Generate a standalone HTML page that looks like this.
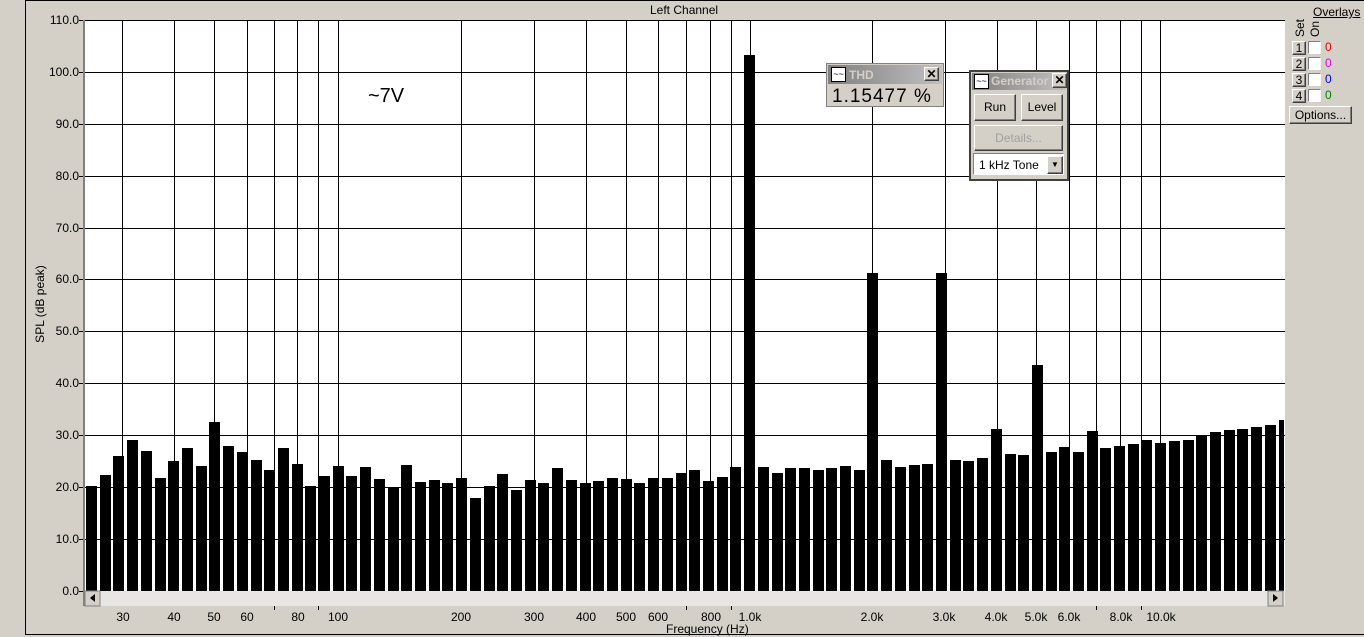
<!DOCTYPE html>
<html><head><style>
body{margin:0;width:1364px;height:637px;overflow:hidden;background:#d4d0c8;font-family:"Liberation Sans",Arial,sans-serif;position:relative}
.a{position:absolute}
.yl{position:absolute;right:1285px;font-size:12px;width:60px;text-align:right}
.fl{position:absolute;top:610px;font-size:12px;transform:translateX(-50%)}
.btn{position:absolute;background:#d4d0c8;border:1px solid;border-color:#fff #404040 #404040 #fff;box-shadow:inset -1px -1px #808080;font-size:12px;text-align:center}
.cb{position:absolute;width:11px;height:11px;background:#fff;border:1px solid;border-color:#808080 #fff #fff #808080}
</style></head><body>
<div class="a" style="left:25px;top:0;width:1339px;height:635px;border-left:1px solid #000;border-bottom:1px solid #000;border-top:1px solid #000;box-sizing:border-box"></div>
<div class="a" style="left:0;top:3px;width:1364px;text-align:center;font-size:12px;padding-left:4px;box-sizing:border-box;width:1364px"><span style="position:absolute;left:650px">Left Channel</span></div>
<svg class="a" style="left:0;top:0" width="1364" height="637">
<rect x="85" y="20" width="1200" height="571" fill="#fff"/>
<g stroke="#000" stroke-width="1">
<path d="M85 20.5H1285M85 72.5H1285M85 124.5H1285M85 176.5H1285M85 228.5H1285M85 279.5H1285M85 331.5H1285M85 383.5H1285M85 435.5H1285M85 487.5H1285M85 539.5H1285M85 591.5H1285"/>
<path d="M122.5 20V591M174.5 20V591M214.5 20V591M247.5 20V591M274.5 20V591M297.5 20V591M318.5 20V591M338.5 20V591M461.5 20V591M534.5 20V591M586.5 20V591M626.5 20V591M658.5 20V591M686.5 20V591M710.5 20V591M731.5 20V591M750.5 20V591M872.5 20V591M945.5 20V591M997.5 20V591M1036.5 20V591M1069.5 20V591M1096.5 20V591M1120.5 20V591M1141.5 20V591M1160.5 20V591"/>
<path d="M79 20.5H85M79 72.5H85M79 124.5H85M79 176.5H85M79 228.5H85M79 279.5H85M79 331.5H85M79 383.5H85M79 435.5H85M79 487.5H85M79 539.5H85M79 591.5H85"/>
</g>
<g transform="translate(0,591) scale(1,-1)" fill="#000">
<rect x="86" width="11" height="105"/><rect x="100" width="11" height="116"/><rect x="113" width="11" height="135"/><rect x="127" width="11" height="151"/><rect x="141" width="11" height="140"/><rect x="155" width="11" height="113"/><rect x="168" width="11" height="130"/><rect x="182" width="11" height="143"/><rect x="196" width="11" height="125"/><rect x="209" width="11" height="169"/><rect x="223" width="11" height="145"/><rect x="237" width="11" height="139"/><rect x="251" width="11" height="131"/><rect x="264" width="11" height="121"/><rect x="278" width="11" height="143"/><rect x="292" width="11" height="127"/><rect x="305" width="11" height="105"/><rect x="319" width="11" height="115"/><rect x="333" width="11" height="125"/><rect x="346" width="11" height="115"/><rect x="360" width="11" height="124"/><rect x="374" width="11" height="112"/><rect x="388" width="11" height="104"/><rect x="401" width="11" height="126"/><rect x="415" width="11" height="109"/><rect x="429" width="11" height="111"/><rect x="442" width="11" height="108"/><rect x="456" width="11" height="113"/><rect x="470" width="11" height="93"/><rect x="484" width="11" height="105"/><rect x="497" width="11" height="117"/><rect x="511" width="11" height="101"/><rect x="525" width="11" height="111"/><rect x="538" width="11" height="108"/><rect x="552" width="11" height="123"/><rect x="566" width="11" height="111"/><rect x="580" width="11" height="108"/><rect x="593" width="11" height="110"/><rect x="607" width="11" height="113"/><rect x="621" width="11" height="112"/><rect x="634" width="11" height="108"/><rect x="648" width="11" height="113"/><rect x="662" width="11" height="113"/><rect x="676" width="11" height="118"/><rect x="689" width="11" height="121"/><rect x="703" width="11" height="110"/><rect x="717" width="11" height="114"/><rect x="730" width="11" height="124"/><rect x="744" width="11" height="536"/><rect x="758" width="11" height="124"/><rect x="772" width="11" height="118"/><rect x="785" width="11" height="123"/><rect x="799" width="11" height="123"/><rect x="813" width="11" height="121"/><rect x="826" width="11" height="123"/><rect x="840" width="11" height="125"/><rect x="854" width="11" height="121"/><rect x="867" width="11" height="318"/><rect x="881" width="11" height="131"/><rect x="895" width="11" height="124"/><rect x="909" width="11" height="126"/><rect x="922" width="11" height="127"/><rect x="936" width="11" height="318"/><rect x="950" width="11" height="131"/><rect x="963" width="11" height="130"/><rect x="977" width="11" height="133"/><rect x="991" width="11" height="162"/><rect x="1005" width="11" height="137"/><rect x="1018" width="11" height="136"/><rect x="1032" width="11" height="226"/><rect x="1046" width="11" height="139"/><rect x="1059" width="11" height="144"/><rect x="1073" width="11" height="139"/><rect x="1087" width="11" height="160"/><rect x="1100" width="11" height="143"/><rect x="1114" width="11" height="145"/><rect x="1128" width="11" height="147"/><rect x="1141" width="11" height="151"/><rect x="1155" width="11" height="148"/><rect x="1169" width="11" height="150"/><rect x="1183" width="11" height="151"/><rect x="1196" width="11" height="155"/><rect x="1210" width="11" height="159"/><rect x="1224" width="11" height="161"/><rect x="1237" width="11" height="162"/><rect x="1251" width="11" height="164"/><rect x="1265" width="11" height="166"/><rect x="1279" width="5" height="171"/>
</g>
<rect x="83" y="20" width="2" height="586" fill="#808080"/>
<rect x="85" y="591" width="1200" height="15" fill="#e8e6e2"/>
<rect x="85" y="591" width="15" height="15" fill="#d4d0c8" stroke="#808080"/>
<path d="M95 594v8l-5-4z" fill="#000"/>
<rect x="1268" y="591" width="15" height="15" fill="#d4d0c8" stroke="#808080"/>
<path d="M1273 594v8l5-4z" fill="#000"/>
<g stroke="#000"><path d="M274.5 606v4M318.5 606v4M686.5 606v4M731.5 606v4M1096.5 606v4M1141.5 606v4"/></g>
</svg>
<div class="yl" style="top:13px">110.0</div><div class="yl" style="top:65px">100.0</div><div class="yl" style="top:117px">90.0</div><div class="yl" style="top:169px">80.0</div><div class="yl" style="top:221px">70.0</div><div class="yl" style="top:272px">60.0</div><div class="yl" style="top:324px">50.0</div><div class="yl" style="top:376px">40.0</div><div class="yl" style="top:428px">30.0</div><div class="yl" style="top:480px">20.0</div><div class="yl" style="top:532px">10.0</div><div class="yl" style="top:584px">0.0</div>
<div class="a" style="left:-10px;top:297px;width:100px;text-align:center;font-size:12px;transform:rotate(-90deg)">SPL (dB peak)</div>
<div class="a" style="left:368px;top:85px;font-size:20px">~7V</div>
<div class="fl" style="left:123px">30</div><div class="fl" style="left:174px">40</div><div class="fl" style="left:214px">50</div><div class="fl" style="left:247px">60</div><div class="fl" style="left:298px">80</div><div class="fl" style="left:338px">100</div><div class="fl" style="left:461px">200</div><div class="fl" style="left:534px">300</div><div class="fl" style="left:586px">400</div><div class="fl" style="left:626px">500</div><div class="fl" style="left:658px">600</div><div class="fl" style="left:711px">800</div><div class="fl" style="left:750px">1.0k</div><div class="fl" style="left:872px">2.0k</div><div class="fl" style="left:944px">3.0k</div><div class="fl" style="left:996px">4.0k</div><div class="fl" style="left:1036px">5.0k</div><div class="fl" style="left:1069px">6.0k</div><div class="fl" style="left:1121px">8.0k</div><div class="fl" style="left:1161px">10.0k</div>
<div class="a" style="left:666px;top:622px;font-size:12px">Frequency (Hz)</div>
<!-- right panel -->
<div class="a" style="left:1313px;top:5px;font-size:12px;text-decoration:underline">Overlays</div>
<div class="a" style="left:1293px;top:20px;font-size:12px;transform:rotate(-90deg);transform-origin:left top;top:37px">Set</div>
<div class="a" style="left:1308px;top:37px;font-size:12px;transform:rotate(-90deg);transform-origin:left top">On</div>
<div class="btn" style="left:1292px;top:41px;width:12px;height:12px;line-height:12px">1</div><div class="cb" style="left:1308px;top:41px"></div><div class="a" style="left:1325px;top:40px;font-size:12px;color:#e00000">0</div>
<div class="btn" style="left:1292px;top:57px;width:12px;height:12px;line-height:12px">2</div><div class="cb" style="left:1308px;top:57px"></div><div class="a" style="left:1325px;top:56px;font-size:12px;color:#e000e0">0</div>
<div class="btn" style="left:1292px;top:73px;width:12px;height:12px;line-height:12px">3</div><div class="cb" style="left:1308px;top:73px"></div><div class="a" style="left:1325px;top:72px;font-size:12px;color:#0000e0">0</div>
<div class="btn" style="left:1292px;top:89px;width:12px;height:12px;line-height:12px">4</div><div class="cb" style="left:1308px;top:89px"></div><div class="a" style="left:1325px;top:88px;font-size:12px;color:#008000">0</div>
<div class="btn" style="left:1289px;top:106px;width:61px;height:16px;line-height:16px">Options...</div>
<!-- THD -->
<div class="a" style="left:826px;top:63px;width:118px;height:44px;background:#d4d0c8;border:1px solid #808080;box-sizing:border-box">
<div class="a" style="left:1px;top:1px;width:114px;height:19px;background:linear-gradient(90deg,#808080,#c0c0c0)"></div>
<div class="a" style="left:4px;top:3px;width:13px;height:13px;background:#fff;border:1px solid #000;font-size:9px;line-height:13px;text-align:center">~~</div>
<div class="a" style="left:22px;top:4px;font-size:12px;font-weight:bold;color:#d4d0c8">THD</div>
<div class="btn" style="left:97px;top:3px;width:13px;height:12px;line-height:12px;font-weight:bold">✕</div>
<div class="a" style="left:5px;top:22px;font-size:19px;letter-spacing:1px">1.15477 %</div>
</div>
<!-- Generator -->
<div class="a" style="left:969px;top:70px;width:100px;height:111px;background:#d4d0c8;border:2px solid #404040;box-sizing:border-box">
<div class="a" style="left:1px;top:1px;width:94px;height:17px;background:linear-gradient(90deg,#808080,#c0c0c0)"></div>
<div class="a" style="left:3px;top:2px;width:13px;height:13px;background:#fff;border:1px solid #000;font-size:9px;line-height:13px;text-align:center">~~</div>
<div class="a" style="left:20px;top:2px;font-size:12px;font-weight:bold;color:#d4d0c8">Generator</div>
<div class="btn" style="left:81px;top:1px;width:13px;height:13px;line-height:13px;font-weight:bold;background:#d4d0c8">✕</div>
<div class="btn" style="left:3px;top:22px;width:40px;height:25px;line-height:25px">Run</div>
<div class="btn" style="left:50px;top:22px;width:40px;height:25px;line-height:25px">Level</div>
<div class="btn" style="left:3px;top:53px;width:87px;height:24px;line-height:24px;color:#a0a0a0">Details...</div>
<div class="a" style="left:2px;top:81px;width:91px;height:22px;background:#fff;border:1px solid;border-color:#808080 #fff #fff #808080;font-size:12px;line-height:22px;padding-left:5px;box-sizing:border-box">1 kHz Tone</div>
<div class="btn" style="left:76px;top:84px;width:14px;height:16px;line-height:16px;font-size:8px">▼</div>
</div>
</body></html>
